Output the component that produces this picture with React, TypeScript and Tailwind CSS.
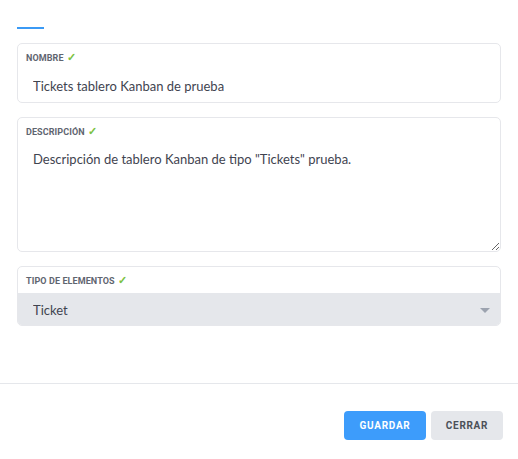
import { useState } from "react";

function Check() {
  return <span className="ml-[3px] text-[11px] font-bold text-[#7cc243]">✓</span>;
}

function Label({ children }: { children: string }) {
  return (
    <div className="flex items-center px-2 pt-[6px] font-['Roboto',sans-serif] text-[9px] font-bold uppercase tracking-[0.1px] text-[#5f6570]">
      {children}
      <Check />
    </div>
  );
}

export default function App() {
  const [nombre, setNombre] = useState("Tickets tablero Kanban de prueba");
  const [descripcion, setDescripcion] = useState(
    'Descripción de tablero Kanban de tipo "Tickets" prueba.',
  );
  const [tipo, setTipo] = useState("Ticket");

  return (
    <div className="flex h-[459px] w-[518px] flex-col bg-white font-['Lato',sans-serif] text-[#374151]">
      <div className="px-[17px] pt-[27px]">
        <div className="h-[2px] w-[27px] bg-[#3b9af5]" />
      </div>

      <div className="flex flex-col gap-[14px] px-[17px] pt-[14px]">
        <label className="flex h-[60px] flex-col rounded-[5px] border border-[#e6e7eb]">
          <Label>Nombre</Label>
          <input
            className="mt-[10px] px-[15px] text-[13px] text-[#3f4450] outline-none"
            value={nombre}
            onChange={(e) => setNombre(e.target.value)}
          />
        </label>

        <label className="flex h-[135px] flex-col rounded-[5px] border border-[#e6e7eb]">
          <Label>Descripción</Label>
          <textarea
            className="mt-[9px] flex-1 resize-y rounded-b-[5px] px-[15px] text-[13px] leading-[18px] text-[#3f4450] outline-none"
            value={descripcion}
            onChange={(e) => setDescripcion(e.target.value)}
          />
        </label>

        <label className="flex h-[60px] flex-col overflow-hidden rounded-[5px] border border-[#e6e7eb]">
          <div className="h-[26px]">
            <Label>Tipo de elementos</Label>
          </div>
          <div className="relative flex-1 bg-[#e5e7eb]">
            <select
              className="h-full w-full appearance-none bg-transparent px-[15px] pt-[3px] text-[13px] text-[#3f4450] outline-none"
              value={tipo}
              onChange={(e) => setTipo(e.target.value)}
            >
              <option value="Ticket">Ticket</option>
              <option value="Tarea">Tarea</option>
            </select>
            <span className="pointer-events-none absolute right-[10px] top-[15px] h-0 w-0 border-x-[5px] border-t-[5px] border-x-transparent border-t-[#9ca3af]" />
          </div>
        </label>
      </div>

      <div className="mt-[57px] h-px bg-[#e5e7eb]" />

      <div className="flex justify-end gap-[5px] px-[15px] pt-[27px]">
        <button
          type="button"
          className="h-[29px] w-[82px] rounded-[4px] bg-[#3d9cfb] font-['Roboto',sans-serif] text-[10px] font-bold tracking-[0.7px] text-white"
        >
          GUARDAR
        </button>
        <button
          type="button"
          className="h-[29px] w-[72px] rounded-[4px] bg-[#e5e7eb] font-['Roboto',sans-serif] text-[10px] font-bold tracking-[0.7px] text-[#4b5058]"
        >
          CERRAR
        </button>
      </div>
    </div>
  );
}
